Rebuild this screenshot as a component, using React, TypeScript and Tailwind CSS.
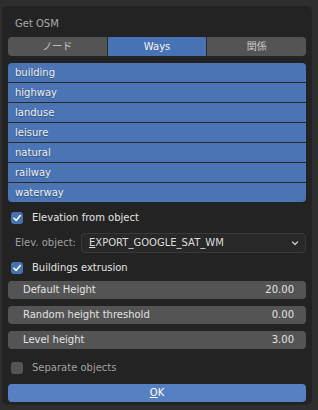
import React from "react";

const font = { fontFamily: '"DejaVu Sans", "Noto Sans CJK JP", sans-serif' };

function Check({ on }: { on: boolean }) {
  return (
    <div
      className={`w-[12px] h-[12px] rounded-[3px] flex items-center justify-center ${
        on ? "bg-[#4772b3]" : "bg-[#545454]"
      }`}
    >
      {on && (
        <svg width="10" height="10" viewBox="0 0 10 10">
          <path d="M2 5.2 L4.2 7.4 L8.2 2.6" fill="none" stroke="#ffffff" strokeWidth="1.6" strokeLinecap="round" strokeLinejoin="round" />
        </svg>
      )}
    </div>
  );
}

function Field({ label, value }: { label: string; value: string }) {
  return (
    <div className="h-[18px] rounded-[4px] bg-[#545454] flex items-center justify-between pl-[15px] pr-[12px] text-[#e2e2e2]">
      <span>{label}</span>
      <span>{value}</span>
    </div>
  );
}

export default function App() {
  const items = ["building", "highway", "landuse", "leisure", "natural", "railway", "waterway"];
  return (
    <div className="w-[318px] h-[410px] bg-[#2e2e2e] overflow-hidden text-[10px] leading-none" style={font}>
      <div className="ml-[2px] mt-[6px] w-[310px] h-[399px] rounded-[6px] bg-[#232323] px-[6px] flex flex-col">
        <div className="h-[17px] mt-[9px] pl-[7px] flex items-center text-[#a8a8a8]">Get OSM</div>
        <div className="mt-[5px] h-[19px] flex rounded-[4px] overflow-hidden gap-[1px] bg-[#2a2a2a]">
          <div className="flex-1 bg-[#545454] flex items-center justify-center text-[#cccccc]">ノード</div>
          <div className="flex-1 bg-[#4772b3] flex items-center justify-center text-[#f4f4f4]">Ways</div>
          <div className="flex-1 bg-[#545454] flex items-center justify-center text-[#cccccc]">関係</div>
        </div>
        <div className="mt-[7px] rounded-[4px] overflow-hidden flex flex-col gap-[1px] bg-[#2a2a2a]">
          {items.map((t) => (
            <div key={t} className="h-[19px] bg-[#4a74b3] flex items-center pl-[7px] text-[#eeeeee]" style={{ textShadow: "0 1px 1px rgba(0,0,0,0.3)" }}>
              {t}
            </div>
          ))}
        </div>
        <div className="mt-[10px] h-[12px] flex items-center pl-[3px] gap-[9px] text-[#e2e2e2]">
          <Check on />
          <span>Elevation from object</span>
        </div>
        <div className="mt-[9px] h-[20px] flex items-center">
          <span className="w-[73px] pl-[7px] text-[#a0a0a0]">Elev. object:</span>
          <div className="flex-1 h-[20px] rounded-[4px] bg-[#282828] border border-[#3a3a3a] flex items-center justify-between pl-[7px] pr-[5px] text-[#dcdcdc]">
            <span>
              <span className="underline">E</span>XPORT_GOOGLE_SAT_WM
            </span>
            <svg width="10" height="10" viewBox="0 0 10 10">
              <path d="M2.5 4 L5 6.5 L7.5 4" fill="none" stroke="#c8c8c8" strokeWidth="1.3" strokeLinecap="round" strokeLinejoin="round" />
            </svg>
          </div>
        </div>
        <div className="mt-[9px] h-[12px] flex items-center pl-[3px] gap-[9px] text-[#e2e2e2]">
          <Check on />
          <span>Buildings extrusion</span>
        </div>
        <div className="mt-[7px] flex flex-col gap-[7px]">
          <Field label="Default Height" value="20.00" />
          <Field label="Random height threshold" value="0.00" />
          <Field label="Level height" value="3.00" />
        </div>
        <div className="mt-[13px] h-[12px] flex items-center pl-[3px] gap-[9px] text-[#a0a0a0]">
          <Check on={false} />
          <span>Separate objects</span>
        </div>
        <div className="mt-[10px] h-[18px] rounded-[4px] bg-[#5680c2] flex items-center justify-center text-[#ffffff]">
          <span>
            <span className="underline">O</span>K
          </span>
        </div>
      </div>
    </div>
  );
}
